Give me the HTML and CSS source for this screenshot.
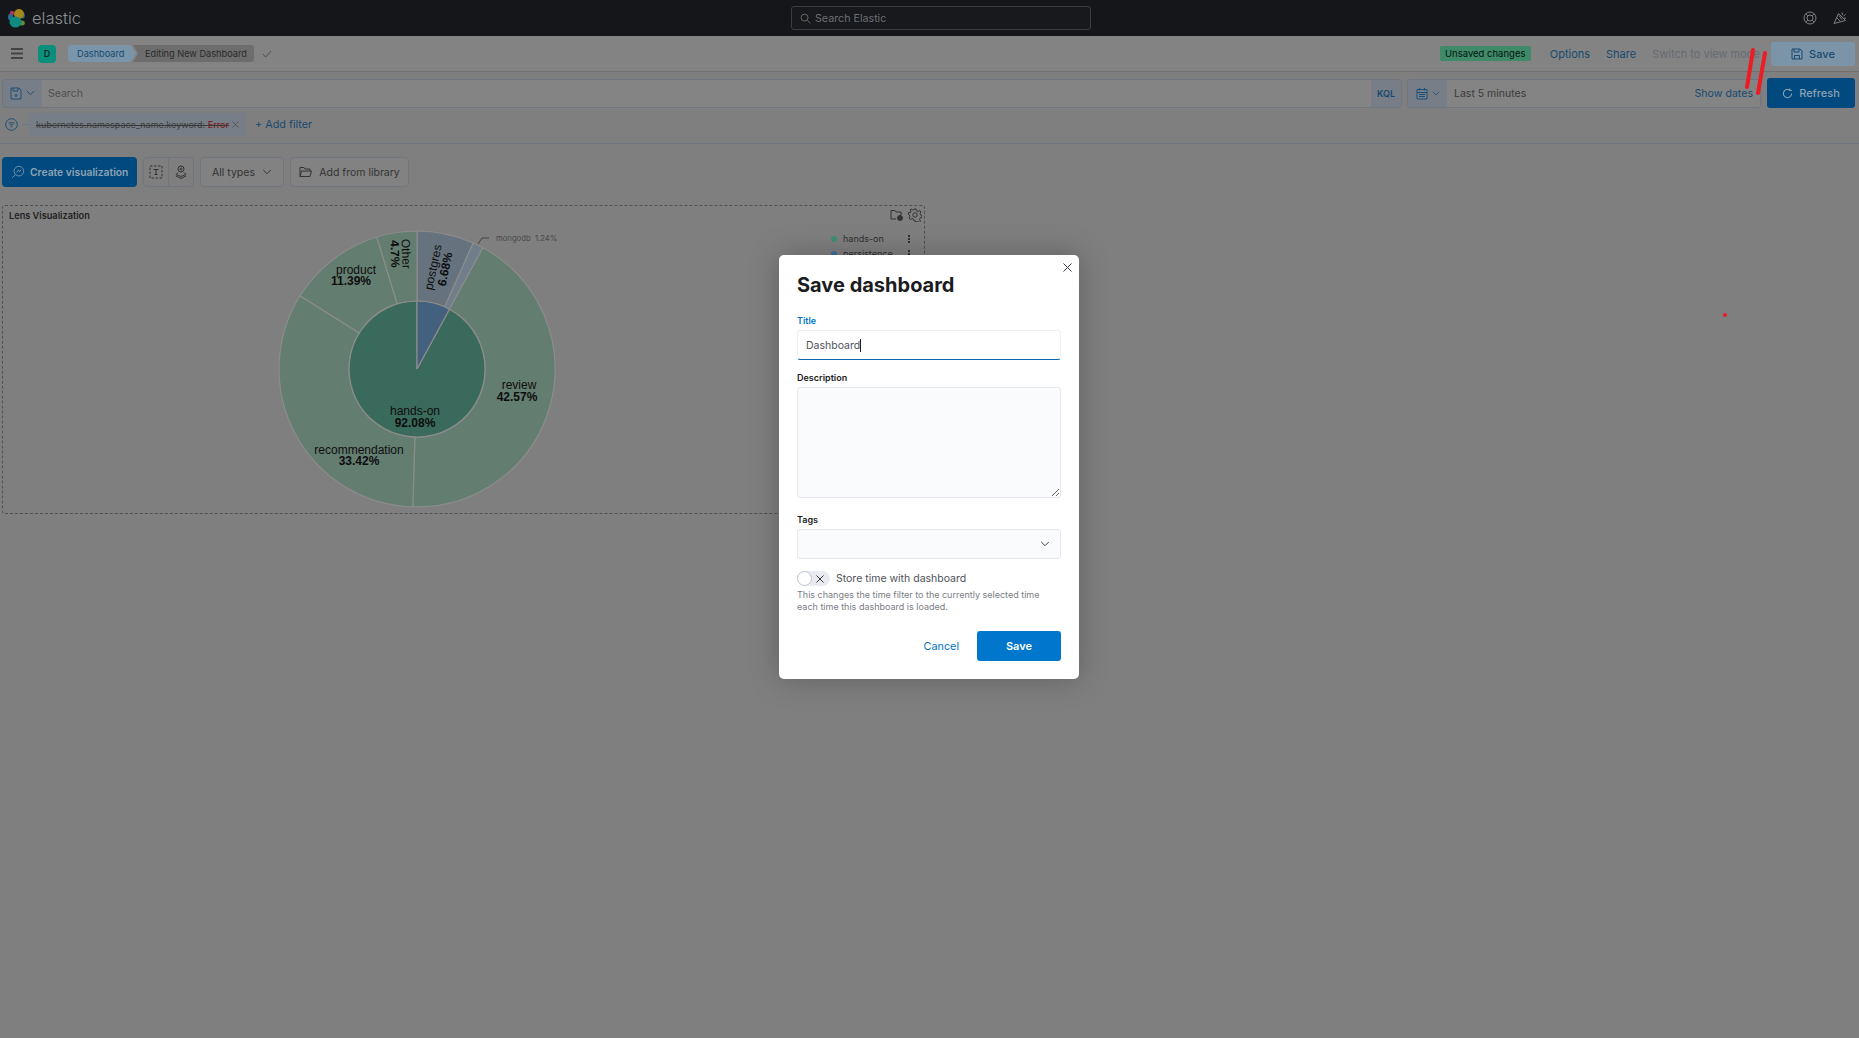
FILE: index.html
```html
<!DOCTYPE html>
<html lang="en">
  <head>
    <meta charset="UTF-8" />
    <title>Editing New Dashboard - Elastic</title>
    <link rel="stylesheet" href="styles.css">
  </head>
  <body>
    <header class="topbar">
      <div class="brand">
        <svg class="logo" width="20" height="20" viewBox="0 0 20 20">
          <ellipse cx="16" cy="7.500" rx="1.800" ry="3" fill="#1f6f95"/>
          <ellipse cx="15" cy="15" rx="2.800" ry="2.500" fill="#5f8f3a"/>
          <ellipse cx="3.500" cy="9" rx="2.500" ry="3.500" fill="#1f6f95"/>
          <circle cx="5" cy="5" r="2.200" fill="#a03a68"/>
          <circle cx="12" cy="6" r="5" fill="#a8871a"/>
          <ellipse cx="8.500" cy="14" rx="6" ry="5.500" fill="#108a80"/>
        </svg>
        <span class="wordmark">elastic</span>
      </div>
      <div class="global-search">
        <svg width="11" height="11" viewBox="0 0 12 12" fill="none" stroke="#6d6f73"><circle cx="5" cy="5" r="3.800"/><path d="M8 8l3.200 3.200"/></svg>
        <span>Search Elastic</span>
      </div>
      <div class="top-icons">
        <svg width="14" height="14" viewBox="0 0 14 14" fill="none" stroke="#7e8084" stroke-width="1"><circle cx="7" cy="7" r="6"/><circle cx="7" cy="7" r="3"/><path d="M2.800 2.800l2 2M11.200 2.800l-2 2M2.800 11.200l2-2M11.200 11.200l-2-2"/></svg>
        <svg width="14" height="14" viewBox="0 0 14 14" fill="none" stroke="#7e8084" stroke-width="1"><path d="M1 12.500L5.500 2.500 12.500 9.500zM4 7l3.500 3.500M6 4.500l3 4M9 1.500l.5 2.500M12.500 3.500l-2 1.500M13 7l-2 .3"/></svg>
      </div>
    </header>

    <nav class="appbar">
      <svg class="menu-icon" width="12" height="11" viewBox="0 0 12 11" fill="#444"><rect width="12" height="2" y="0"/><rect width="12" height="2" y="4.500"/><rect width="12" height="2" y="9"/></svg>
      <div class="space-avatar">D</div>
      <div class="crumbs">
        <span class="crumb crumb-link">Dashboard</span>
        <span class="crumb crumb-current">Editing New Dashboard</span>
      </div>
      <svg class="crumb-check" width="10" height="8" viewBox="0 0 10 8" fill="none" stroke="#4e4e4e"><path d="M.8 4l2.800 3L9.200 1"/></svg>
      <div class="appbar-right">
        <span class="badge">Unsaved changes</span>
        <a class="top-link">Options</a>
        <a class="top-link top-link-share">Share</a>
        <a class="top-link top-link-off">Switch to view mode</a>
        <button class="save-top">
          <svg width="12" height="12" viewBox="0 0 12 12" fill="none" stroke="#174a70"><path d="M1 1h8l2 2v8H1zM3 1v3h5V1M3.500 11V7.500h5V11"/></svg>
          Save
        </button>
      </div>
    </nav>

    <section class="querybar">
      <div class="query-input">
        <div class="query-menu">
          <svg width="12" height="13" viewBox="0 0 12 13" fill="none" stroke="#1b5078"><path d="M1 1h8l2 2v9H1zM3 1v3h5V1"/><circle cx="6" cy="8.500" r="1"/></svg>
          <svg width="9" height="6" viewBox="0 0 9 6" fill="none" stroke="#1b5078"><path d="M.8 1l3.700 3.700L8.200 1"/></svg>
        </div>
        <span class="query-placeholder">Search</span>
        <span class="kql">KQL</span>
      </div>
      <div class="date-picker">
        <div class="date-menu">
          <svg width="12" height="13" viewBox="0 0 12 13" fill="none" stroke="#1b5078"><path d="M1 2.500h10V12H1zM1 5.500h10M3.500 1v2.500M8.500 1v2.500M3 7.500h6M3 9.500h6"/></svg>
          <svg width="8" height="5" viewBox="0 0 9 6" fill="none" stroke="#1b5078"><path d="M.8 1l3.700 3.700L8.200 1"/></svg>
        </div>
        <span class="date-value">Last 5 minutes</span>
        <a class="show-dates">Show dates</a>
      </div>
      <button class="refresh">
        <svg width="11" height="11" viewBox="0 0 12 12" fill="none" stroke="#8ea2b3" stroke-width="1.100"><path d="M10.500 6A4.500 4.500 0 1 1 8.500 2.300M8.500 .5v2.200h2.200"/></svg>
        Refresh
      </button>
    </section>

    <section class="filterbar">
      <svg width="13" height="13" viewBox="0 0 13 13" fill="none" stroke="#1b5078"><circle cx="6.500" cy="6.500" r="5.800"/><path d="M3.500 4.800h6M4.700 6.800h3.600M5.800 8.800h1.400"/></svg>
      <span class="filter-dash"></span>
      <div class="pill">
        <span class="pill-text">kubernetes.namespace_name.keyword: <b>Error</b></span>
        <svg width="7" height="7" viewBox="0 0 7 7" stroke="#555"><path d="M.5.5l6 6M6.500.5l-6 6"/></svg>
      </div>
      <a class="add-filter">+ Add filter</a>
    </section>

    <section class="toolbar">
      <button class="create">
        <svg width="14" height="14" viewBox="0 0 16 16" fill="none" stroke="#7e97aa"><circle cx="9" cy="7" r="5.500"/><path d="M1.500 14.500l3.500-3.500M6.500 8.500l2-3 1.500 2 1.500-2"/></svg>
        Create visualization
      </button>
      <div class="icon-group">
        <span class="icon-cell"><svg width="14" height="14" viewBox="0 0 14 14" fill="none" stroke="#333"><path stroke-dasharray="2.500 1.500" d="M1 1h12v12H1z"/><path d="M4.500 4.500h5M7 4.500v5M5.500 9.500h3"/></svg></span>
        <span class="icon-cell"><svg width="14" height="15" viewBox="0 0 14 15" fill="none" stroke="#333"><circle cx="7" cy="4" r="3"/><circle cx="7" cy="4" r="1"/><path d="M4 7.500l-2 2 5 2 5-2-2-2M2 11l5 2.500 5-2.500"/></svg></span>
      </div>
      <button class="tool-btn tool-types">
        All types
        <svg width="10" height="6" viewBox="0 0 9 6" fill="none" stroke="#333"><path d="M.8 1l3.700 3.700L8.200 1"/></svg>
      </button>
      <button class="tool-btn tool-library">
        <svg width="13" height="12" viewBox="0 0 13 12" fill="none" stroke="#333"><path d="M1 10.500V1.500h4l1 1.500h5v2M1 10.500l1.500-5.500h10l-1.500 5.500z"/></svg>
        Add from library
      </button>
    </section>

    <section class="panel">
      <div class="panel-title">Lens Visualization</div>
      <div class="panel-actions">
        <svg width="13" height="12" viewBox="0 0 13 12" fill="none" stroke="#333"><path d="M1 10V1.500h4l1 1.500h5v3M1 10h5"/><circle cx="10" cy="9" r="2.500" fill="#333"/></svg>
        <svg width="14" height="14" viewBox="0 0 14 14" fill="none" stroke="#333"><circle cx="7" cy="7" r="2.200"/><path d="M6 1h2l.4 1.800 1.600.7 1.600-1 1.400 1.400-1 1.600.7 1.600 1.300.4v2l-1.800.4-.7 1.600 1 1.600-1.400 1.400-1.600-1-1.600.7L8 13H6l-.4-1.800-1.600-.7-1.600 1L1 10.100l1-1.600-.7-1.600L.5 6.500v-2l1.800.1.700-1.600-1-1.100L3.400 1l1.200 1 1-.2z"/></svg>
      </div>
      <svg class="pie" width="320" height="300" viewBox="-160 -160 320 300">
        <g stroke="#8c8c8c" stroke-width="1.200">
          <path fill="#66737f" d="M0-138A138 138 0 0 1 56.200-126L27.700-62.100A68 68 0 0 0 0-68Z"/>
          <path fill="#707d8b" d="M56.200-126A138 138 0 0 1 65.900-121.300L32.400-59.800A68 68 0 0 0 27.700-62.100Z"/>
          <path fill="#647d71" d="M65.900-121.300A138 138 0 0 1-4.200 137.900L-2.100 68A68 68 0 0 0 32.400-59.800Z"/>
          <path fill="#647d71" d="M-4.200 137.900A138 138 0 0 1-117-73.200L-57.600-36.100A68 68 0 0 0-2.100 68Z"/>
          <path fill="#647d71" d="M-117-73.200A138 138 0 0 1-40.200-132L-19.800-65.100A68 68 0 0 0-57.600-36.100Z"/>
          <path fill="#647d71" d="M-40.200-132A138 138 0 0 1 0-138L0-68A68 68 0 0 0-19.800-65.100Z"/>
          <path fill="#3a6a5b" d="M32.400-59.800A68 68 0 1 1 0-68V0Z"/>
          <path fill="#44607f" d="M0-68A68 68 0 0 1 32.400-59.800L0 0Z"/>
        </g>
        <path class="leader" d="M61-125L65-131H72"/>
        <text class="tiny" x="79" y="-128">mongodb&#160;&#160;1.24%</text>
        <text class="slice" x="-2" y="46">hands-on</text>
        <text class="slice-val" x="-2" y="58">92.08%</text>
        <text class="slice" x="102" y="20">review</text>
        <text class="slice-val" x="100" y="32">42.57%</text>
        <text class="slice" x="-58" y="85">recommendation</text>
        <text class="slice-val" x="-58" y="96">33.42%</text>
        <text class="slice" x="-61" y="-95">product</text>
        <text class="slice-val" x="-66" y="-84">11.39%</text>
        <g transform="translate(-15 -115) rotate(88)"><text class="slice" x="0" y="0">Other</text></g>
        <g transform="translate(-26 -115) rotate(88)"><text class="slice-val" x="0" y="0">4.7%</text></g>
        <g transform="translate(20 -101) rotate(-78)"><text class="slice" x="0" y="0">postgres</text></g>
        <g transform="translate(32 -99) rotate(-78)"><text class="slice-val" x="0" y="0">6.68%</text></g>
      </svg>
      <ul class="legend">
        <li><i class="dot dot-green"></i><span>hands-on</span><b class="kebab"></b></li>
        <li><i class="dot dot-blue"></i><span>persistence</span><b class="kebab"></b></li>
      </ul>
    </section>

    <div class="modal">
      <svg class="modal-close" width="9" height="9" viewBox="0 0 9 9" stroke="#343741"><path d="M.5.5l8 8M8.500.5l-8 8"/></svg>
      <h2>Save dashboard</h2>
      <label class="field-label label-active">Title</label>
      <div class="text-input">Dashboard<span class="caret"></span></div>
      <label class="field-label">Description</label>
      <textarea class="text-area"></textarea>
      <label class="field-label">Tags</label>
      <div class="select-input">
        <svg width="10" height="6" viewBox="0 0 9 6" fill="none" stroke="#343741"><path d="M.8 1l3.700 3.700L8.200 1"/></svg>
      </div>
      <div class="switch-row">
        <span class="switch">
          <span class="knob"></span>
          <svg width="8" height="8" viewBox="0 0 8 8" stroke="#343741"><path d="M.5.5l7 7M7.500.5l-7 7"/></svg>
        </span>
        <span>Store time with dashboard</span>
      </div>
      <p class="help">This changes the time filter to the currently selected time<br>each time this dashboard is loaded.</p>
      <div class="modal-footer">
        <a class="cancel">Cancel</a>
        <button class="modal-save">Save</button>
      </div>
    </div>

    <svg class="marks" width="1859" height="1038">
      <path d="M1753 50L1747 87M1765 53L1758 93" stroke="#ed1c24" stroke-width="4" stroke-linecap="round"/>
      <circle cx="1725" cy="315" r="2" fill="#ed1c24"/>
    </svg>
  </body>
</html>
```

FILE: styles.css
```css
* {
  box-sizing: border-box;
}
html, body {
  margin: 0;
  height: 1038px;
  overflow: hidden;
}
body {
  position: relative;
  font-family: Inter, "Noto Sans", sans-serif;
  font-size: 10px;
  color: #3a3a3a;
  background: #7f7f7f;
}
button {
  font-family: inherit;
  cursor: pointer;
  white-space: nowrap;
}
a {
  color: #174a70;
}

.topbar {
  display: flex;
  align-items: center;
  height: 36px;
  background: #14161a;
}
.brand {
  display: flex;
  align-items: center;
  gap: 5px;
  width: 791px;
  padding-left: 7px;
}
.wordmark {
  font-size: 16.500px;
  font-weight: 300;
  color: #8f9194;
}
.global-search {
  display: flex;
  align-items: center;
  gap: 4px;
  width: 300px;
  height: 24px;
  padding-left: 8px;
  border: 1px solid #3b3d42;
  border-radius: 3px;
  background: #17191d;
  color: #6d6f73;
  font-size: 10.700px;
}
.top-icons {
  display: flex;
  align-items: center;
  gap: 16px;
  margin-left: auto;
  padding-right: 12px;
}

.appbar {
  display: flex;
  align-items: center;
  height: 36px;
  padding: 0 4px 0 11px;
  background: #838383;
  border-bottom: 1px solid #6f6f6f;
}
.space-avatar {
  display: flex;
  align-items: center;
  justify-content: center;
  width: 18px;
  height: 18px;
  margin-left: 15px;
  border-radius: 4px;
  background: #0b8f7d;
  color: #0c2b28;
  font-size: 9px;
  font-weight: 600;
}
.crumbs {
  display: flex;
  margin-left: 12px;
  white-space: nowrap;
  font-size: 9.200px;
}
.crumb {
  display: flex;
  align-items: center;
  height: 17px;
}
.crumb-link {
  width: 68px;
  padding-left: 9px;
  border-radius: 3px 0 0 3px;
  background: #7a95a9;
  color: #174a70;
  clip-path: polygon(0 0, 92% 0, 100% 50%, 92% 100%, 0 100%);
}
.crumb-current {
  width: 121px;
  margin-left: -3px;
  padding-left: 12px;
  border-radius: 0 3px 3px 0;
  background: #6d6d6d;
  color: #2a2a2a;
  clip-path: polygon(0 0, 100% 0, 100% 100%, 0 100%, 5px 50%);
}
.crumb-check {
  margin-left: 8px;
}
.appbar-right {
  display: flex;
  align-items: center;
  margin-left: auto;
}
.badge {
  width: 91px;
  height: 15px;
  line-height: 15px;
  text-align: center;
  border-radius: 2px;
  background: #3f8a69;
  color: #06140e;
  font-size: 9.500px;
}
.top-link {
  margin-left: 19px;
  font-size: 11px;
}
.top-link-share {
  margin-left: 16px;
}
.top-link-off {
  margin-left: 16px;
  color: #666b73;
}
.save-top {
  display: flex;
  align-items: center;
  justify-content: center;
  gap: 6px;
  width: 84px;
  height: 24px;
  margin-left: 11px;
  border: 0;
  border-radius: 3px;
  background: #7b94a8;
  color: #174a70;
  font-size: 11px;
  font-weight: 500;
}

.querybar {
  display: flex;
  align-items: center;
  gap: 5px;
  height: 30px;
  margin-top: 6px;
  padding: 0 4px 0 2px;
}
.query-input,
.date-picker {
  display: flex;
  align-items: center;
  height: 29px;
  border: 1px solid #70767f;
  border-radius: 3px;
  background: #848484;
  overflow: hidden;
}
.query-input {
  width: 1400px;
}
.query-menu,
.date-menu {
  display: flex;
  align-items: center;
  justify-content: center;
  gap: 4px;
  width: 39px;
  height: 100%;
  background: #787e87;
}
.query-placeholder {
  margin-left: 6px;
  color: #4f4f4f;
  font-size: 10.500px;
}
.kql {
  display: flex;
  align-items: center;
  justify-content: center;
  width: 30px;
  height: 100%;
  margin-left: auto;
  background: #787e87;
  color: #174a70;
  font-size: 9px;
  font-weight: 600;
}
.date-picker {
  width: 354px;
}
.date-value {
  margin-left: 7px;
  font-size: 10.500px;
}
.show-dates {
  margin-left: auto;
  margin-right: 7px;
  font-size: 10.600px;
}
.refresh {
  display: flex;
  align-items: center;
  justify-content: center;
  gap: 6px;
  width: 88px;
  height: 30px;
  margin-left: 1px;
  border: 0;
  border-radius: 3px;
  background: #004a7f;
  color: #8ea2b3;
  font-size: 11px;
  font-weight: 500;
}

.filterbar {
  display: flex;
  align-items: center;
  height: 31px;
  padding: 0 0 8px 5px;
  margin-top: 5px;
  border-bottom: 1px solid #70767f;
}
.filter-dash {
  width: 7px;
  height: 1px;
  margin-left: 4px;
  background: #70767f;
}
.pill {
  display: flex;
  align-items: center;
  justify-content: space-between;
  width: 217px;
  height: 23px;
  padding: 0 7px;
  border-radius: 3px;
  background: #787e87;
}
.pill-text {
  font-size: 9px;
  text-decoration: line-through;
  white-space: nowrap;
}
.pill-text b {
  font-weight: 500;
  color: #7c1a1a;
}
.add-filter {
  margin-left: 9px;
  font-size: 10.800px;
}

.toolbar {
  display: flex;
  gap: 6px;
  height: 30px;
  margin-top: 13px;
  padding-left: 2px;
}
.create {
  display: flex;
  align-items: center;
  gap: 5px;
  width: 135px;
  padding: 0 0 0 9px;
  border: 0;
  border-radius: 4px;
  background: #004a7f;
  color: #8ea2b3;
  font-size: 10.300px;
  font-weight: 600;
}
.icon-group {
  display: flex;
  width: 51px;
  border: 1px solid #70767f;
  border-radius: 4px;
}
.icon-cell {
  display: flex;
  align-items: center;
  justify-content: center;
  flex: 1;
}
.icon-cell + .icon-cell {
  border-left: 1px solid #70767f;
}
.tool-btn {
  display: flex;
  align-items: center;
  justify-content: center;
  gap: 7px;
  padding: 0;
  border: 1px solid #70767f;
  border-radius: 4px;
  background: #828282;
  color: #333;
  font-size: 10.500px;
}
.tool-types {
  width: 84px;
}
.tool-library {
  width: 119px;
}

.panel {
  position: relative;
  width: 923px;
  height: 309px;
  margin: 18px 0 0 2px;
  border: 1px dashed #4f5157;
  border-radius: 3px;
}
.panel-title {
  padding: 4px 0 0 6px;
  font-size: 9.200px;
  font-weight: 600;
  color: #222;
}
.panel-actions {
  position: absolute;
  top: 2px;
  right: 2px;
  display: flex;
  align-items: center;
  gap: 5px;
}
.pie {
  position: absolute;
  left: 254px;
  top: 3px;
  overflow: visible;
}
.pie text {
  font-family: "Liberation Sans", Arial, sans-serif;
  fill: #0d0d0d;
  text-anchor: middle;
}
.pie .slice {
  font-size: 12px;
}
.pie .slice-val {
  font-size: 12px;
  font-weight: 700;
}
.pie .tiny {
  font-family: Inter, sans-serif;
  font-size: 7.700px;
  fill: #484848;
  text-anchor: start;
}
.leader {
  fill: none;
  stroke: #444;
}
.legend {
  position: absolute;
  top: 25px;
  left: 828px;
  width: 85px;
  margin: 0;
  padding: 0;
  list-style: none;
  font-size: 9px;
  color: #2f2f2f;
}
.legend li {
  display: flex;
  align-items: center;
  height: 15px;
}
.dot {
  width: 6px;
  height: 6px;
  margin-right: 6px;
  border-radius: 50%;
}
.dot-green {
  background: #3f8f74;
}
.dot-blue {
  background: #3f6f9a;
}
.kebab {
  width: 2px;
  height: 8px;
  margin-left: auto;
  margin-right: 6px;
  background: repeating-linear-gradient(#333 0 2px, transparent 2px 3px);
}

.modal {
  position: absolute;
  top: 255px;
  left: 779px;
  width: 300px;
  height: 424px;
  padding: 18px 18px 0;
  border-radius: 5px;
  background: #fff;
  box-shadow: 0 0 30px rgba(0, 0, 0, 0.25);
  color: #343741;
}
.modal-close {
  position: absolute;
  top: 8px;
  right: 7px;
}
.modal h2 {
  margin: 0 0 18px;
  font-size: 20px;
  line-height: 24px;
  font-weight: 700;
  color: #1a1c21;
}
.field-label {
  display: block;
  margin-bottom: 3px;
  font-size: 9px;
  line-height: 12px;
  font-weight: 600;
  color: #1a1c21;
}
.label-active {
  color: #0077cc;
}
.text-input {
  display: flex;
  align-items: center;
  width: 264px;
  height: 30px;
  margin-bottom: 12px;
  padding-left: 8px;
  border: 1px solid #eef0f3;
  border-bottom: 1px solid #0d67a8;
  border-radius: 3px;
  font-size: 10.500px;
  color: #4f525a;
}
.caret {
  width: 1px;
  height: 13px;
  background: #1a1c21;
}
.text-area {
  display: block;
  width: 264px;
  height: 111px;
  margin-bottom: 16px;
  border: 1px solid #e6e8ef;
  border-radius: 3px;
  background: #fafbfd;
}
.select-input {
  display: flex;
  align-items: center;
  justify-content: flex-end;
  width: 264px;
  height: 30px;
  padding-right: 10px;
  border: 1px solid #e6e8ef;
  border-radius: 3px;
  background: #fafbfd;
}
.switch-row {
  display: flex;
  align-items: center;
  gap: 6px;
  margin-top: 12px;
  font-size: 10.500px;
  color: #4f525a;
}
.switch {
  position: relative;
  display: flex;
  align-items: center;
  justify-content: flex-end;
  width: 33px;
  height: 15px;
  padding-right: 6px;
  border-radius: 8px;
  background: #e9ebf0;
}
.knob {
  position: absolute;
  left: 0;
  top: 0;
  width: 15px;
  height: 15px;
  border: 1px solid #c2c5cc;
  border-radius: 50%;
  background: #fff;
}
.help {
  margin: 3px 0 0;
  font-size: 9px;
  line-height: 12px;
  color: #7b7e85;
}
.modal-footer {
  display: flex;
  align-items: center;
  justify-content: flex-end;
  gap: 18px;
  margin-top: 18px;
}
.cancel {
  color: #0071c2;
  font-size: 10.800px;
  font-weight: 400;
}
.modal-save {
  width: 84px;
  height: 30px;
  border: 0;
  border-radius: 3px;
  background: #0077cc;
  color: #fff;
  font-size: 11px;
  font-weight: 600;
}

.marks {
  position: absolute;
  top: 0;
  left: 0;
  pointer-events: none;
}
```
